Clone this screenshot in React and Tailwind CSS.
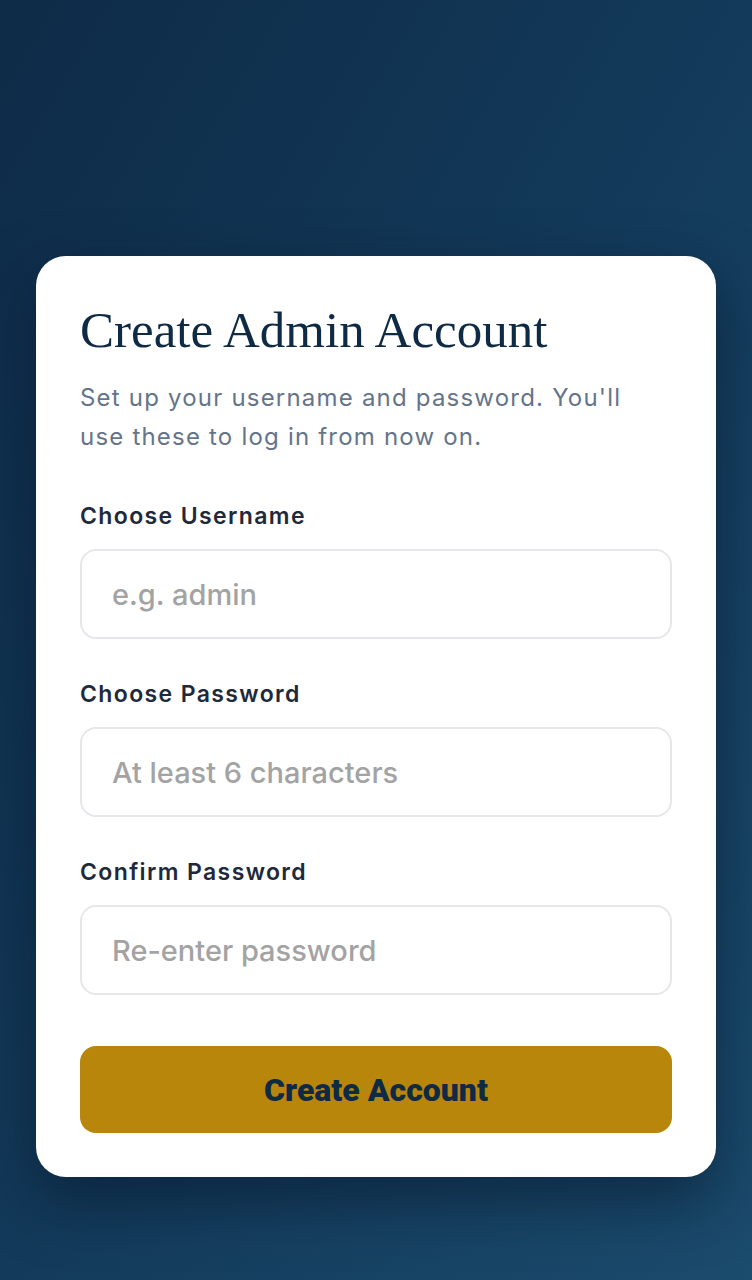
import React, { useState } from 'react';

function Field({ label, placeholder, type, value, onChange }) {
    return (
        <div>
            <label className="block text-[23px] leading-[30px] font-semibold tracking-[0.06em] text-[#1e293b] mb-[18px]">
                {label}
            </label>
            <input
                type={type}
                value={value}
                onChange={onChange}
                placeholder={placeholder}
                className="w-full h-[90px] px-[30px] rounded-[16px] border-2 border-[#e5e7eb] bg-white text-[29px] font-medium text-[#1e293b] placeholder:text-[#a3a3a3] outline-none"
            />
        </div>
    );
}

export default function App() {
    // Estado del formulario
    const [username, setUsername] = useState('');
    const [password, setPassword] = useState('');
    const [confirm, setConfirm] = useState('');

    return (
        <div className="min-h-screen bg-gradient-to-br from-[#0e2b47] via-[#133a5a] to-[#1b4b6d] px-[36px] pt-[256px] pb-[104px] font-['Inter',sans-serif]">
            <div className="bg-white rounded-[30px] px-[44px] pt-[44px] pb-[44px] shadow-[0_24px_60px_rgba(5,20,40,0.55)]">
                {/* Encabezado */}
                <h1 className="font-['Liberation_Serif',serif] text-[51px] leading-[60px] text-[#0f2a44]">
                    Create Admin Account
                </h1>
                <p className="mt-[18px] max-w-[570px] text-[24px] leading-[39px] tracking-[0.05em] text-[#64748b]">
                    Set up your username and password. You'll use these to log in from now on.
                </p>

                {/* Campos */}
                <div className="mt-[45px] flex flex-col gap-[40px]">
                    <Field
                        label="Choose Username"
                        placeholder="e.g. admin"
                        type="text"
                        value={username}
                        onChange={(e) => setUsername(e.target.value)}
                    />
                    <Field
                        label="Choose Password"
                        placeholder="At least 6 characters"
                        type="password"
                        value={password}
                        onChange={(e) => setPassword(e.target.value)}
                    />
                    <Field
                        label="Confirm Password"
                        placeholder="Re-enter password"
                        type="password"
                        value={confirm}
                        onChange={(e) => setConfirm(e.target.value)}
                    />
                </div>

                {/* Botón */}
                <button className="mt-[51px] w-full h-[87px] rounded-[16px] bg-[#b8860b] text-[#0f2a44] text-[32px] font-black font-['Roboto',sans-serif]">
                    Create Account
                </button>
            </div>
        </div>
    );
}
